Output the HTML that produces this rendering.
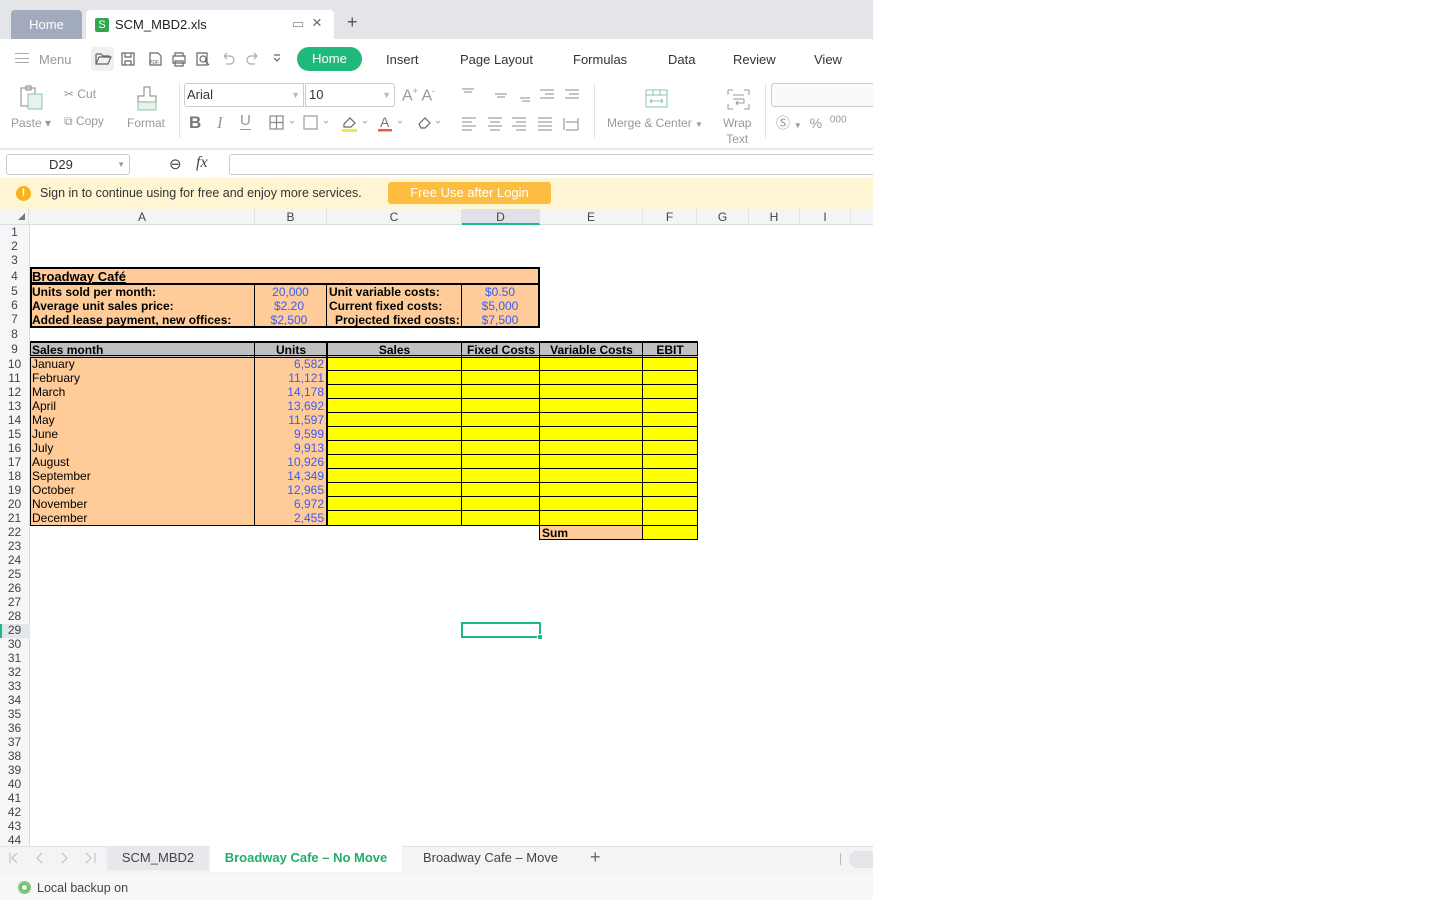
<!DOCTYPE html>
<html><head><meta charset="utf-8"><style>
*{margin:0;padding:0;box-sizing:border-box}
body{width:1440px;height:900px;background:#fff;font-family:"Liberation Sans",Arial,sans-serif;position:relative;overflow:hidden}
.a{position:absolute}
.t{font-size:13px;color:#333}
.g{color:#999}
.rh{position:absolute;left:0;width:29px;text-align:center;font-size:12px;color:#444}
.ch{position:absolute;top:209px;height:16px;font-size:12px;color:#444;text-align:center;line-height:16px;border-right:1px solid #e0e2e6}
.c{position:absolute;font-size:12px;white-space:nowrap;overflow:hidden}
.b{font-weight:bold;color:#000}
.v{color:#3a5cf5}
.or{background:#ffcc99}
.ye{background:#ffff00}
.ic{stroke:#666;fill:none;stroke-width:1.2}
</style></head><body>
<div class="a" style="left:0;top:0;width:873px;height:39px;background:#e3e5e9"></div>
<div class="a" style="left:11px;top:10px;width:71px;height:29px;background:#a1abbd;border-radius:4px 4px 0 0;color:#fff;font-size:13px;text-align:center;line-height:29px">Home</div>
<div class="a" style="left:86px;top:10px;width:248px;height:29px;background:#fff;border-radius:4px 4px 0 0"></div>
<div class="a" style="left:95px;top:18px;width:14px;height:14px;background:#2fa84f;border-radius:2px;color:#fff;font-size:11px;text-align:center;line-height:14px">S</div>
<div class="a t" style="left:115px;top:17px;color:#222">SCM_MBD2.xls</div>
<div class="a" style="left:292px;top:16px;font-size:13px;color:#888">▭</div>
<div class="a" style="left:312px;top:13px;font-size:17px;color:#666">×</div>
<div class="a" style="left:347px;top:12px;font-size:18px;color:#555">+</div>

<div class="a" style="left:15px;top:53px;width:14px;height:10px;border-top:1.5px solid #aaa;border-bottom:1.5px solid #aaa"></div>
<div class="a" style="left:15px;top:57.5px;width:14px;height:1.5px;background:#aaa"></div>
<div class="a t g" style="left:39px;top:52px">Menu</div>
<div class="a" style="left:91px;top:47px;width:23px;height:24px;background:#eef0f2;border-radius:3px"></div>
<svg class="a" style="left:94px;top:50px" width="190" height="18">
<path class="ic" d="M2 4h5l2 2h6v2M2 4v10h12l3-7H5l-3 7"/>
<rect class="ic" x="28" y="3" width="12" height="12"/><path class="ic" d="M31 3v4h6V3M31 15v-4h6v4"/>
<path class="ic" d="M56 3h8l3 3v9H56z"/><text x="55" y="14" font-size="5" fill="#555" font-family="Liberation Sans">PDF</text>
<path class="ic" d="M79 6h12v7H79zM81 6V3h8v3M81 11h8v5h-8z"/>
<path class="ic" d="M103 3h10v12h-10z"/><circle class="ic" cx="109" cy="9" r="3"/><path class="ic" d="M111 11l4 4"/>
<path class="ic" style="stroke:#aaa" d="M130 6h6a4 4 0 010 8h-4M130 6l3-3M130 6l3 3"/>
<path class="ic" style="stroke:#aaa" d="M163 6h-6a4 4 0 000 8h4M163 6l-3-3M163 6l-3 3"/>
<path class="ic" d="M180 5h6M180 8l3 3 3-3"/>
</svg>
<div class="a" style="left:297px;top:47px;width:65px;height:24px;background:#1fba7a;border-radius:12px;color:#fff;font-size:13px;text-align:center;line-height:24px">Home</div>
<div class="a t" style="left:386px;top:52px">Insert</div>
<div class="a t" style="left:460px;top:52px">Page Layout</div>
<div class="a t" style="left:573px;top:52px">Formulas</div>
<div class="a t" style="left:668px;top:52px">Data</div>
<div class="a t" style="left:733px;top:52px">Review</div>
<div class="a t" style="left:814px;top:52px">View</div>

<svg class="a" style="left:18px;top:84px" width="30" height="28"><rect x="3" y="4" width="14" height="18" class="ic" style="stroke:#999"/><rect x="8" y="2" width="5" height="4" class="ic" style="stroke:#999"/><rect x="10" y="10" width="14" height="15" fill="#e6f3ec" stroke="#8cc6a6"/></svg>
<div class="a g" style="left:11px;top:116px;font-size:12px">Paste ▾</div>
<div class="a g" style="left:64px;top:87px;font-size:12px">✂ Cut</div>
<div class="a g" style="left:64px;top:114px;font-size:12px">⧉ Copy</div>
<svg class="a" style="left:135px;top:85px" width="24" height="28"><path d="M9 2h6v9h6v6H3v-6h6z" class="ic" style="stroke:#999"/><rect x="3" y="17" width="18" height="8" fill="#e6f3ec" stroke="#8cc6a6"/></svg>
<div class="a g" style="left:127px;top:116px;font-size:12px">Format</div>
<div class="a" style="left:179px;top:83px;width:1px;height:55px;background:#e2e2e2"></div>
<div class="a" style="left:184px;top:83px;width:120px;height:24px;border:1px solid #ccc;border-radius:3px 0 0 3px;font-size:13px;line-height:22px;padding-left:2px;color:#333">Arial<span style="float:right;color:#bbb;font-size:9px;margin-right:3px">▼</span></div>
<div class="a" style="left:305px;top:83px;width:90px;height:24px;border:1px solid #ccc;border-radius:0 3px 3px 0;font-size:13px;line-height:22px;padding-left:3px;color:#333">10<span style="float:right;color:#bbb;font-size:9px;margin-right:3px">▼</span></div>
<div class="a g" style="left:402px;top:86px;font-size:16px">A<sup style="font-size:9px">+</sup> A<sup style="font-size:9px">-</sup></div>
<div class="a" style="left:189px;top:113px;font-size:17px;color:#777;font-weight:bold">B</div>
<div class="a" style="left:217px;top:113px;font-size:17px;color:#999;font-style:italic;font-family:'Liberation Serif',serif">I</div>
<div class="a" style="left:240px;top:112px;font-size:15px;color:#999;border-bottom:1px solid #6b6">U</div>
<svg class="a" style="left:268px;top:114px" width="180" height="20">
<rect x="2" y="2" width="13" height="13" class="ic" style="stroke:#888"/><path d="M8.5 2v13M2 8.5h13" class="ic" style="stroke:#888"/>
<path d="M22 7l2 2 2-2" stroke="#aaa" fill="none"/>
<rect x="36" y="2" width="13" height="13" class="ic" style="stroke:#999"/><path d="M56 7l2 2 2-2" stroke="#aaa" fill="none"/>
<path d="M76 10l6-6 5 5-4 4h-7z" class="ic"/><rect x="74" y="15" width="15" height="3" fill="#f2e64a"/><path d="M95 7l2 2 2-2" stroke="#aaa" fill="none"/>
<text x="112" y="13" font-size="14" fill="#777" font-family="Liberation Sans">A</text><rect x="110" y="15" width="14" height="2.5" fill="#e55"/><path d="M130 7l2 2 2-2" stroke="#aaa" fill="none"/>
<path d="M151 10l6-6 5 5-5 5h-4z" class="ic"/><path d="M168 7l2 2 2-2" stroke="#aaa" fill="none"/>
</svg>
<svg class="a" style="left:460px;top:86px" width="125" height="46" stroke="#888" fill="none">
<path d="M2 3h12M4 6h8M35 8h12M37 11h8M60 12h10M62 15h8M80 4h14M85 8h9M80 12h14M105 4h14M109 8h10M105 12h14"/>
<path d="M2 32h14M2 36h10M2 40h14M2 44h10M28 32h14M30 36h10M28 40h14M30 44h10M52 32h14M56 36h10M52 40h14M56 44h10M78 32h14M78 36h14M78 40h14M78 44h14M104 32v12M106 36h12M106 44h12M118 32v12"/>
</svg>
<div class="a" style="left:594px;top:83px;width:1px;height:55px;background:#e2e2e2"></div>
<svg class="a" style="left:645px;top:89px" width="24" height="20"><rect x="1" y="1" width="21" height="17" fill="none" stroke="#8cc6a6"/><path d="M1 6h21M8 1v5M15 1v5M5 12h13M5 12l2-2M5 12l2 2M18 12l-2-2M18 12l-2 2" stroke="#8cc6a6" fill="none"/></svg>
<div class="a g" style="left:607px;top:116px;font-size:12px">Merge &amp; Center <span style="font-size:8px">▼</span></div>
<svg class="a" style="left:727px;top:89px" width="24" height="22" stroke="#999" fill="none"><path d="M1 1h5M17 1h5M1 1v5M22 1v5M1 15v5h5M22 15v5h-5M6 6h11M6 10h11M17 10v4h-8M9 14l2-2M9 14l2 2"/></svg>
<div class="a g" style="left:723px;top:115px;font-size:12px;text-align:center;line-height:16px">Wrap<br>Text</div>
<div class="a" style="left:765px;top:83px;width:1px;height:55px;background:#e2e2e2"></div>
<div class="a" style="left:771px;top:83px;width:110px;height:24px;border:1px solid #ccc;border-radius:3px;background:#fafafa"></div>
<div class="a g" style="left:776px;top:113px;font-size:14px">Ⓢ <span style="font-size:8px">▼</span> &nbsp;% &nbsp;<sup style="font-size:10px">000</sup></div>
<div class="a" style="left:0;top:148px;width:873px;height:2px;background:#e8e9ec"></div>

<div class="a" style="left:6px;top:154px;width:124px;height:21px;border:1px solid #ccc;border-radius:3px;font-size:13px;line-height:19px;padding-left:42px;color:#333">D29<span style="position:absolute;right:4px;font-size:8px;color:#999">▼</span></div>
<div class="a" style="left:169px;top:155px;font-size:15px;color:#444">⊖</div>
<div class="a" style="left:196px;top:154px;font-size:16px;color:#444;font-style:italic;font-family:'Liberation Serif',serif">fx</div>
<div class="a" style="left:229px;top:154px;width:660px;height:21px;border:1px solid #ccc;border-radius:3px"></div>

<div class="a" style="left:0;top:178px;width:873px;height:31px;background:#fef6d3"></div>
<div class="a" style="left:16px;top:186px;width:15px;height:15px;border-radius:50%;background:#f7b21f;color:#fff;font-size:11px;font-weight:bold;text-align:center;line-height:15px">!</div>
<div class="a" style="left:40px;top:186px;font-size:12.5px;color:#333">Sign in to continue using for free and enjoy more services.</div>
<div class="a" style="left:388px;top:182px;width:163px;height:22px;background:#fdbd41;border-radius:3px;color:#fff;font-size:13px;text-align:center;line-height:22px">Free Use after Login</div>

<div class="a" style="left:0;top:209px;width:873px;height:16px;background:#f3f4f6;border-bottom:1px solid #d8dadf"></div>
<div class="a" style="left:0;top:209px;width:29px;height:16px;border-right:1px solid #ddd"></div>
<div class="a" style="left:18px;top:213px;width:0;height:0;border-left:7px solid transparent;border-bottom:7px solid #777"></div>
<div class="ch" style="left:30px;width:225px">A</div>
<div class="ch" style="left:255px;width:72px">B</div>
<div class="ch" style="left:327px;width:135px">C</div>
<div class="ch" style="left:462px;width:78px;background:#dfe2e8;border-bottom:2px solid #1fb97c">D</div>
<div class="ch" style="left:540px;width:103px">E</div>
<div class="ch" style="left:643px;width:54px">F</div>
<div class="ch" style="left:697px;width:52px">G</div>
<div class="ch" style="left:749px;width:51px">H</div>
<div class="ch" style="left:800px;width:51px">I</div>

<div class="a" style="left:0;top:225px;width:30px;height:621px;background:#f5f6f8;border-right:1px solid #dcdde1"></div>
<div class="a" style="left:0;top:624px;width:30px;height:14px;background:#e3e6ea;border-left:2px solid #1fb97c"></div>
<div class="rh" style="top:225px">1</div><div class="rh" style="top:239px">2</div><div class="rh" style="top:253px">3</div><div class="rh" style="top:269px">4</div><div class="rh" style="top:284px">5</div><div class="rh" style="top:298px">6</div><div class="rh" style="top:312px">7</div><div class="rh" style="top:327px">8</div><div class="rh" style="top:342px">9</div><div class="rh" style="top:357px">10</div><div class="rh" style="top:371px">11</div><div class="rh" style="top:385px">12</div><div class="rh" style="top:399px">13</div><div class="rh" style="top:413px">14</div><div class="rh" style="top:427px">15</div><div class="rh" style="top:441px">16</div><div class="rh" style="top:455px">17</div><div class="rh" style="top:469px">18</div><div class="rh" style="top:483px">19</div><div class="rh" style="top:497px">20</div><div class="rh" style="top:511px">21</div><div class="rh" style="top:525px">22</div><div class="rh" style="top:539px">23</div><div class="rh" style="top:553px">24</div><div class="rh" style="top:567px">25</div><div class="rh" style="top:581px">26</div><div class="rh" style="top:595px">27</div><div class="rh" style="top:609px">28</div><div class="rh" style="top:623px">29</div><div class="rh" style="top:637px">30</div><div class="rh" style="top:651px">31</div><div class="rh" style="top:665px">32</div><div class="rh" style="top:679px">33</div><div class="rh" style="top:693px">34</div><div class="rh" style="top:707px">35</div><div class="rh" style="top:721px">36</div><div class="rh" style="top:735px">37</div><div class="rh" style="top:749px">38</div><div class="rh" style="top:763px">39</div><div class="rh" style="top:777px">40</div><div class="rh" style="top:791px">41</div><div class="rh" style="top:805px">42</div><div class="rh" style="top:819px">43</div><div class="rh" style="top:833px">44</div>

<div class="a or" style="left:30px;top:267px;width:510px;height:61px;border:2px solid #000"></div>
<div class="a" style="left:30px;top:283px;width:510px;height:2px;background:#000"></div>
<div class="a" style="left:254px;top:284px;width:1px;height:43px;background:#000"></div>
<div class="a" style="left:326px;top:284px;width:1px;height:43px;background:#000"></div>
<div class="a" style="left:461px;top:284px;width:1px;height:43px;background:#000"></div>
<div class="c b" style="left:32px;top:269px;font-size:13px;text-decoration:underline">Broadway Café</div>
<div class="c b" style="left:32px;top:285px">Units sold per month:</div>
<div class="c b" style="left:32px;top:299px">Average unit sales price:</div>
<div class="c b" style="left:32px;top:313px">Added lease payment, new offices:</div>
<div class="c v" style="left:255px;width:71px;text-align:center;top:285px">20,000</div>
<div class="c v" style="left:255px;width:68px;text-align:center;top:299px">$2.20</div>
<div class="c v" style="left:255px;width:68px;text-align:center;top:313px">$2,500</div>
<div class="c b" style="left:329px;top:285px">Unit variable costs:</div>
<div class="c b" style="left:329px;top:299px">Current fixed costs:</div>
<div class="c b" style="left:335px;top:313px">Projected fixed costs:</div>
<div class="c v" style="left:462px;width:76px;text-align:center;top:285px">$0.50</div>
<div class="c v" style="left:462px;width:76px;text-align:center;top:299px">$5,000</div>
<div class="c v" style="left:462px;width:76px;text-align:center;top:313px">$7,500</div>

<div class="a" style="left:30px;top:341px;width:668px;height:185px;border:1px solid #000;border-top:2px solid #000;background:#ffff00"></div>
<div class="a" style="left:31px;top:343px;width:666px;height:13px;background:#c0c0c0"></div>
<div class="a" style="left:30px;top:355px;width:668px;height:3px;border-top:1px solid #000;border-bottom:1px solid #000;background:#c0c0c0"></div>
<div class="a or" style="left:31px;top:358px;width:296px;height:167px"></div>
<div class="a" style="left:254px;top:342px;width:1px;height:184px;background:#000"></div>
<div class="a" style="left:326px;top:342px;width:1.5px;height:184px;background:#000"></div>
<div class="a" style="left:461px;top:342px;width:1px;height:184px;background:#000"></div>
<div class="a" style="left:539px;top:342px;width:1px;height:198px;background:#000"></div>
<div class="a" style="left:642px;top:342px;width:1px;height:198px;background:#000"></div>
<div class="a" style="left:327px;top:370px;width:370px;height:1px;background:#000;box-shadow:0 14px 0 #000,0 28px 0 #000,0 42px 0 #000,0 56px 0 #000,0 70px 0 #000,0 84px 0 #000,0 98px 0 #000,0 112px 0 #000,0 126px 0 #000,0 140px 0 #000"></div>
<div class="c b" style="left:32px;top:343px">Sales month</div>
<div class="c b" style="left:255px;width:72px;text-align:center;top:343px">Units</div>
<div class="c b" style="left:327px;width:135px;text-align:center;top:343px">Sales</div>
<div class="c b" style="left:462px;width:78px;text-align:center;top:343px">Fixed Costs</div>
<div class="c b" style="left:540px;width:103px;text-align:center;top:343px">Variable Costs</div>
<div class="c b" style="left:643px;width:54px;text-align:center;top:343px">EBIT</div>
<div class="c" style="left:32px;top:357px;line-height:14px;white-space:pre">January
February
March
April
May
June
July
August
September
October
November
December</div>
<div class="c v" style="left:255px;width:69px;text-align:right;top:357px;line-height:14px;white-space:pre">6,582
11,121
14,178
13,692
11,597
9,599
9,913
10,926
14,349
12,965
6,972
2,455</div>
<div class="a or" style="left:539px;top:525px;width:104px;height:15px;border:1px solid #000;border-right:none"></div>
<div class="a ye" style="left:642px;top:525px;width:56px;height:15px;border:1px solid #000"></div>
<div class="c b" style="left:542px;top:526px">Sum</div>

<div class="a" style="left:461px;top:622px;width:80px;height:16px;border:2px solid #1fb97c"></div>
<div class="a" style="left:537px;top:634px;width:6px;height:6px;background:#1fb97c;border:1px solid #fff"></div>

<div class="a" style="left:0;top:846px;width:873px;height:28px;background:#f3f4f6;border-top:1px solid #e2e3e6"></div>
<svg class="a" style="left:6px;top:850px" width="95" height="16" stroke="#bbb" fill="none"><path d="M4 3v10M11 3l-5 5 5 5M36 3l-5 5 5 5M56 3l5 5-5 5M80 3l5 5-5 5M89 3v10"/></svg>
<div class="a" style="left:107px;top:846px;width:102px;height:24px;background:#e6e8eb;font-size:13px;color:#444;text-align:center;line-height:24px">SCM_MBD2</div>
<div class="a" style="left:210px;top:846px;width:192px;height:26px;background:#fff;font-size:13px;color:#1fb069;font-weight:bold;text-align:center;line-height:24px">Broadway Cafe – No Move</div>
<div class="a" style="left:403px;top:846px;width:175px;height:24px;font-size:13px;color:#444;text-align:center;line-height:24px">Broadway Cafe – Move</div>
<div class="a" style="left:590px;top:847px;font-size:18px;color:#666">+</div>
<div class="a" style="left:840px;top:853px;width:1px;height:12px;background:#bbb"></div>
<div class="a" style="left:849px;top:851px;width:24px;height:17px;background:#e4e5e8;border-radius:8px 0 0 8px"></div>
<div class="a" style="left:0;top:874px;width:873px;height:26px;background:#f7f7f8"></div>
<div class="a" style="left:18px;top:881px;width:13px;height:13px;border-radius:50%;background:#5cb85c;border:3px solid #7cc87c"></div>
<div class="a" style="left:22px;top:885px;width:5px;height:5px;border-radius:50%;background:#fff"></div>
<div class="a" style="left:37px;top:881px;font-size:12.5px;color:#444">Local backup on</div>
<!-- clip right side -->
<div class="a" style="left:873px;top:0;width:567px;height:900px;background:#fff"></div>
</body></html>
